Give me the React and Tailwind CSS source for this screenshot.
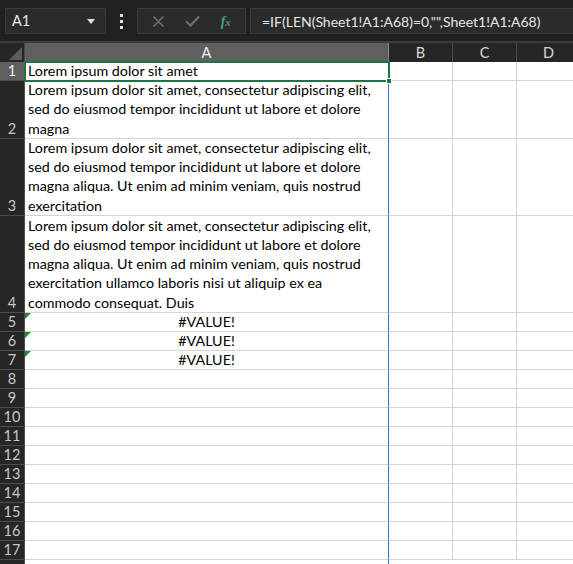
import React from 'react';

const font = { fontFamily: 'Lato, "Noto Sans", sans-serif' };

const LOREM2 = 'Lorem ipsum dolor sit amet, consectetur adipiscing elit, sed do eiusmod tempor incididunt ut labore et dolore magna';
const LOREM3 = 'Lorem ipsum dolor sit amet, consectetur adipiscing elit, sed do eiusmod tempor incididunt ut labore et dolore magna aliqua. Ut enim ad minim veniam, quis nostrud exercitation';
const LOREM4 = 'Lorem ipsum dolor sit amet, consectetur adipiscing elit, sed do eiusmod tempor incididunt ut labore et dolore magna aliqua. Ut enim ad minim veniam, quis nostrud exercitation ullamco laboris nisi ut aliquip ex ea commodo consequat. Duis';

const rows = [
  { n: 1, h: 'h-[19px]', text: 'Lorem ipsum dolor sit amet', selected: true },
  { n: 2, h: 'h-[58px]', text: LOREM2 },
  { n: 3, h: 'h-[77px]', text: LOREM3 },
  { n: 4, h: 'h-[97px]', text: LOREM4 },
  { n: 5, h: 'h-[19px]', error: true },
  { n: 6, h: 'h-[19px]', error: true },
  { n: 7, h: 'h-[19px]', error: true },
  ...Array.from({ length: 10 }, (_, i) => ({ n: i + 8, h: 'h-[19px]' })),
];

const Toolbar = () => (
  <div className="flex items-center h-[41px] bg-[#212121] pl-[5px] pt-[1px]">
    <div className="flex items-center justify-between w-[101px] h-[26px] bg-[#2b2b2b] border border-[#3a3a3a] pl-[6px] pr-[10px]">
      <span className="text-[14.5px] text-[#e6e6e6]">A1</span>
      <span className="w-0 h-0 border-l-[4px] border-r-[4px] border-t-[5px] border-l-transparent border-r-transparent border-t-[#e0e0e0]" />
    </div>
    <div className="flex flex-col gap-[3px] items-center w-[31px]">
      <span className="w-[3px] h-[3px] bg-[#e0e0e0]" />
      <span className="w-[3px] h-[3px] bg-[#e0e0e0]" />
      <span className="w-[3px] h-[3px] bg-[#e0e0e0]" />
    </div>
    <div className="flex items-center justify-around w-[109px] h-[26px] bg-[#2b2b2b] border border-[#3a3a3a] px-[4px]">
      <svg width="13" height="13" viewBox="0 0 13 13">
        <path d="M1.5 1.5 L11.5 11.5 M11.5 1.5 L1.5 11.5" stroke="#6e6e6e" strokeWidth="1.6" />
      </svg>
      <svg width="15" height="12" viewBox="0 0 15 12">
        <path d="M1 6.5 L5.5 10.5 L14 1.5" stroke="#6e6e6e" strokeWidth="2.2" fill="none" />
      </svg>
      <span className="text-[#3ea36c] text-[14px] italic font-bold" style={{ fontFamily: '"Liberation Serif", serif' }}>
        f<span className="text-[11px]">x</span>
      </span>
    </div>
    <div className="flex items-center flex-1 h-[26px] ml-[4px] bg-[#2b2b2b] border border-[#3a3a3a] border-r-0 pl-[11px]">
      <span className="text-[14px] text-[#e6e6e6] whitespace-nowrap">=IF(LEN(Sheet1!A1:A68)=0,"",Sheet1!A1:A68)</span>
    </div>
  </div>
);

const HeaderRow = () => (
  <div className="flex h-[21px] border-t-2 border-[#3c3c3c] bg-[#262626]">
    <div className="relative w-[25px] shrink-0 border-r border-[#4a4a4a]">
      <svg className="absolute right-[2px] bottom-[2px]" width="13" height="13" viewBox="0 0 13 13">
        <path d="M13 0 L13 13 L0 13 Z" fill="#5c5c5c" />
      </svg>
    </div>
    <div className="w-[364px] shrink-0 flex items-center justify-center bg-[#5f5f5f] border-r border-[#8a8a8a] text-[14.5px] text-[#f0f0f0]">A</div>
    {['B', 'C', 'D'].map((c) => (
      <div key={c} className="w-[64px] shrink-0 flex items-center justify-center border-r border-[#4a4a4a] text-[14.5px] text-[#d8d8d8]">{c}</div>
    ))}
  </div>
);

const Row = ({ row }) => (
  <div className={`flex ${row.h}`}>
    <div className={`w-[25px] shrink-0 flex items-end justify-center border-b border-r border-[#4d4d4d] text-[14.5px] leading-[18px] ${row.selected ? 'bg-[#5f5f5f] text-[#f0f0f0]' : 'bg-[#262626] text-[#c8c8c8]'}`}>
      {row.n}
    </div>
    <div className={`relative w-[364px] shrink-0 bg-white border-b border-[#d4d4d4] border-r ${row.n === 1 ? 'border-r-[#d4d4d4]' : 'border-r-[#3b6fd6]'} flex items-end px-[3px] text-[14.3px] leading-[19.3px] text-black`}>
      {row.text && <span className={row.n === 1 ? 'whitespace-nowrap' : ''}>{row.text}</span>}
      {row.error && (
        <>
          <span className="absolute left-0 top-0 w-0 h-0 border-t-[6px] border-r-[6px] border-t-[#1e8c2e] border-r-transparent" />
          <span className="w-full text-center leading-[18px]">#VALUE!</span>
        </>
      )}
    </div>
    {['B', 'C', 'D'].map((c) => (
      <div key={c} className="w-[64px] shrink-0 bg-white border-b border-r border-[#d4d4d4]" />
    ))}
  </div>
);

export default function App() {
  return (
    <div className="w-[573px] h-[564px] overflow-hidden bg-[#212121]" style={font}>
      <Toolbar />
      <HeaderRow />
      <div className="relative">
        {rows.map((row) => (
          <Row key={row.n} row={row} />
        ))}
        <div className="flex h-[19px]">
          <div className="w-[25px] shrink-0 bg-[#262626] border-r border-[#4d4d4d]" />
          <div className="w-[364px] shrink-0 bg-white border-r border-[#3b6fd6]" />
          <div className="flex-1 bg-white" />
        </div>
        <div className="absolute left-[24px] top-[-1px] w-[366px] h-[21px] border-2 border-[#217346] pointer-events-none" />
        <div className="absolute left-[386px] top-[16px] w-[6px] h-[6px] bg-[#217346] border border-white pointer-events-none" />
      </div>
    </div>
  );
}
